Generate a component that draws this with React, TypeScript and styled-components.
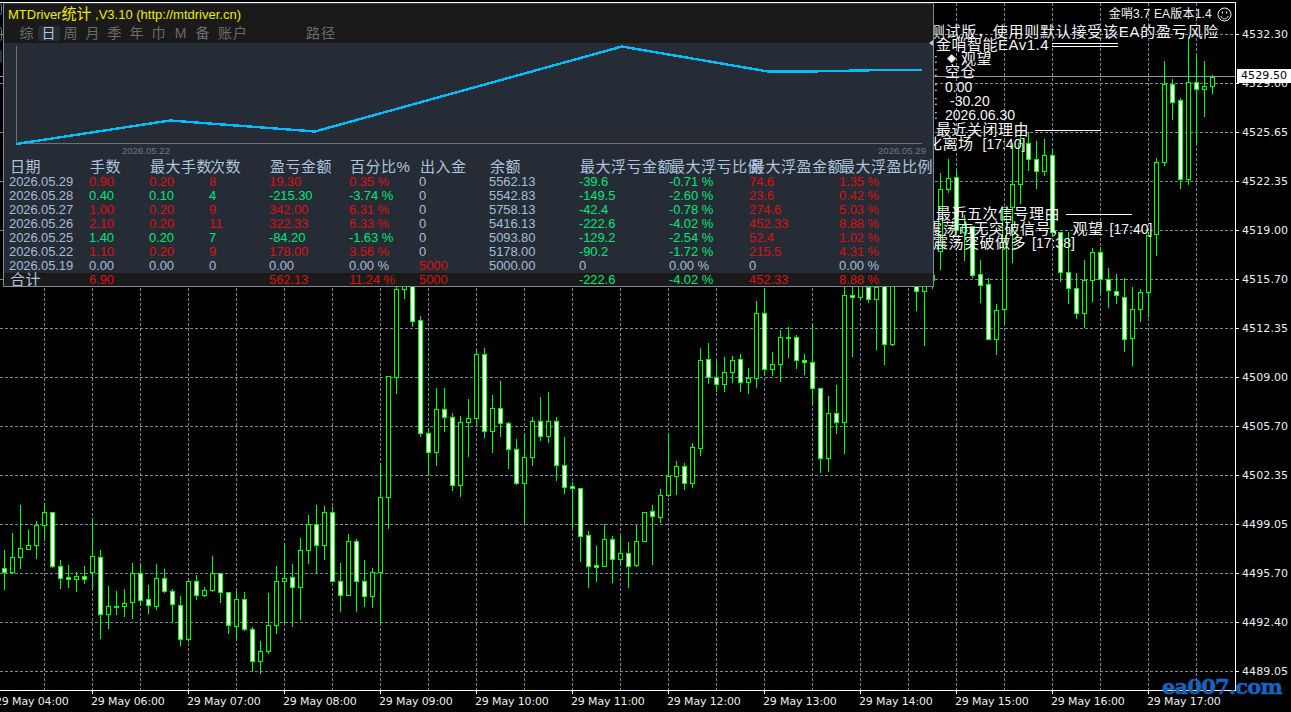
import * as React from "react"
import styled, { createGlobalStyle } from "styled-components"

const cjk = `"Liberation Sans", "Noto Sans CJK SC", sans-serif`
const axisFont = `"DejaVu Sans", sans-serif`

const GlobalStyle = createGlobalStyle`
  html, body {
    margin: 0;
    padding: 0;
    background: #000;
  }
`

const Page = styled.div`
  position: relative;
  width: 1291px;
  height: 712px;
  padding-top: 2px;
  box-sizing: border-box;
  overflow: hidden;
  background: #000;
  display: flex;
  flex-direction: column;
`

const ChartRow = styled.div`
  display: flex;
  height: 689px;
`

const ChartArea = styled.div`
  width: 1235px;
  border-top: 1px solid #fff;
  border-bottom: 1px solid #fff;
  border-right: 1px solid #fff;
`

const ChartSvg = styled.svg`
  display: block;
`

const PriceAxis = styled.div`
  position: relative;
  flex: 1;
  padding-top: 8px;
  display: flex;
  flex-direction: column;
`

const PriceRow = styled.div`
  height: 49px;
  flex: none;
  display: flex;
  align-items: center;
  gap: 3px;
  font: 11px/14px ${axisFont};
  letter-spacing: 0.1px;
  color: #eee;

  &::before {
    content: "";
    width: 3px;
    height: 1px;
    background: #fff;
  }
`

const PriceTag = styled.div`
  position: absolute;
  left: 1px;
  top: 67px;
  width: 54px;
  height: 14px;
  padding-left: 4px;
  box-sizing: border-box;
  background: #fff;
  color: #000;
  font: 11px/14px ${axisFont};
  letter-spacing: 0.1px;
`

const TimeAxis = styled.div`
  display: flex;
  margin-left: -4px;
`

const TimeCell = styled.div`
  width: 96px;
  flex: none;
  color: #eee;
  font: 11px/14px ${axisFont};
  letter-spacing: -0.15px;
  white-space: nowrap;

  &::before {
    content: "";
    display: block;
    width: 1px;
    height: 3px;
    margin-bottom: 1px;
    background: #fff;
  }

  span {
    margin-left: -1px;
  }
`

const Watermark = styled.div`
  position: absolute;
  left: 1162px;
  top: 674px;
  z-index: 3;
  color: #1565c0;
  font: bold 21px/26px "DejaVu Serif", serif;
  letter-spacing: -0.8px;
  -webkit-text-stroke: 0.5px #1565c0;
`

const Panel = styled.div`
  position: absolute;
  left: 3px;
  top: 3px;
  z-index: 2;
  width: 931px;
  height: 284px;
  box-sizing: border-box;
  border: 1px solid #7d8998;
  border-top-color: #33383f;
  overflow: hidden;
  background: #252c36;
`

const TitleBar = styled.div`
  height: 21px;
  padding-left: 4px;
  background: #1a1a1a;
  color: #ecec00;
  font: 13px/20px ${cjk};
  white-space: nowrap;

  b {
    font-size: 15px;
    font-weight: normal;
  }
`

const Tabs = styled.div`
  position: relative;
  height: 18px;
  padding-left: 12px;
  display: flex;
  background: #1a1a1a;

  &::after {
    content: "";
    position: absolute;
    right: 0;
    bottom: -3px;
    border: 3px solid transparent;
    border-right: 4px solid #c4c4c4;
    border-left: 0;
  }
`

const Tab = styled.div<{ $active?: boolean; $gap?: number }>`
  min-width: 22px;
  height: 15px;
  margin-top: 1px;
  margin-left: ${(p) => p.$gap ?? 0}px;
  text-align: center;
  border-radius: 2px;
  background: ${(p) => (p.$active ? "#252c36" : "transparent")};
  color: ${(p) => (p.$active ? "#b0c4de" : "#6c6c6c")};
  font: 14px/15px ${cjk};
  letter-spacing: 1px;
`

const ChartBox = styled.svg`
  display: block;
  background: #252c36;
`

const columns = "80px 60px 60px 60px 80px 70px 70px 90px 90px 80px 90px 90px"

const HeadRow = styled.div`
  display: grid;
  grid-template-columns: ${columns};
  height: 16px;
  padding-left: 6px;
  color: #b0c4de;
  font: 15px/16px ${cjk};
  letter-spacing: 0.5px;
  white-space: nowrap;
`

const Row = styled.div`
  display: grid;
  grid-template-columns: ${columns};
  height: 14px;
  padding-left: 5px;
  font: 13px/14px ${cjk};
  letter-spacing: -0.1px;
  white-space: nowrap;
`

const TotalRow = styled(Row)`
  height: 16px;
  background: #1a1a1a;
`

const TotalName = styled.div`
  padding-left: 1px;
  color: #b0c4de;
  font-size: 15px;
  letter-spacing: 0.5px;
`

type Tone = "up" | "down" | "flat"

const toneColor: Record<Tone, string> = {
  up: "#dc1010",
  down: "#00e676",
  flat: "#a9bcd6",
}

const Cell = styled.div<{ $tone: Tone }>`
  color: ${(p) => toneColor[p.$tone]};
`

const Notes = styled.div`
  position: absolute;
  left: 920px;
  top: 7px;
  z-index: 1;
  width: 320px;
  display: flex;
  flex-direction: column;
  color: #f4f4f4;
`

const Badge = styled.div`
  height: 14px;
  padding-right: 8px;
  display: flex;
  justify-content: flex-end;
  align-items: center;
  gap: 5px;
  font: 12px/14px ${cjk};
  letter-spacing: 0.2px;
`

const Note = styled.div<{ $indent?: number; $top?: number }>`
  height: 14px;
  margin-top: ${(p) => p.$top ?? 0}px;
  padding-left: ${(p) => p.$indent ?? 16}px;
  display: flex;
  align-items: center;
  font: 15px/14px ${cjk};
  letter-spacing: 0.5px;
  white-space: nowrap;
`

const RiskNote = styled(Note)`
  justify-content: flex-end;
  padding-right: 21px;
  letter-spacing: 0.75px;
`

const Colon = styled.span`
  width: 11px;
  flex: none;
  font-size: 13px;
  letter-spacing: 0;
`

const Diamond = styled.span`
  margin: 0 5px 0 2px;
  font-size: 9px;
  letter-spacing: 0;
`

const Figure = styled.span<{ $left?: number }>`
  margin-left: ${(p) => p.$left ?? 0}px;
  font-size: 14px;
  letter-spacing: 0;
`

const Word = styled.span`
  margin-left: 6px;
`

const Rule = styled.span<{ $double?: boolean; $left: number }>`
  width: 66px;
  height: ${(p) => (p.$double ? 2 : 0)}px;
  margin-left: ${(p) => p.$left}px;
  border-top: 1px solid #fff;
  border-bottom: ${(p) => (p.$double ? "1px solid #fff" : "none")};
`

// x = 4 + 8 * index, values are pixel rows: high, body top, body bottom, low, filled
const candles: number[][] = [
  [550, 568, 572, 589, 1], [533, 557, 572, 573, 0], [505, 548, 557, 568, 0], [530, 545, 549, 549, 0],
  [521, 525, 545, 558, 0], [503, 512, 525, 540, 0], [512, 512, 566, 567, 1], [560, 566, 578, 588, 1],
  [565, 577, 579, 587, 1], [572, 576, 579, 591, 0], [566, 576, 579, 583, 1], [519, 556, 572, 588, 0],
  [550, 557, 614, 638, 1], [586, 606, 614, 628, 0], [591, 606, 607, 614, 0], [589, 603, 606, 616, 0],
  [563, 573, 602, 618, 0], [563, 573, 600, 605, 1], [585, 599, 605, 613, 1], [564, 578, 606, 609, 0],
  [569, 578, 591, 592, 1], [589, 591, 604, 622, 1], [596, 605, 639, 645, 1], [581, 581, 639, 641, 0],
  [575, 581, 595, 599, 1], [587, 590, 595, 596, 0], [556, 573, 590, 591, 0], [573, 573, 592, 602, 1],
  [592, 592, 625, 633, 1], [591, 599, 626, 640, 0], [592, 599, 629, 630, 1], [627, 629, 661, 671, 1],
  [641, 651, 661, 673, 0], [593, 625, 651, 653, 0], [566, 581, 625, 633, 0], [543, 578, 581, 622, 0],
  [564, 577, 587, 626, 1], [538, 550, 587, 619, 0], [515, 524, 550, 563, 0], [505, 524, 545, 573, 1],
  [506, 512, 545, 559, 0], [507, 512, 581, 581, 1], [563, 581, 595, 611, 1], [534, 541, 595, 595, 0],
  [539, 541, 581, 611, 1], [560, 581, 596, 606, 1], [568, 572, 596, 607, 0], [463, 497, 572, 622, 0],
  [376, 376, 497, 528, 0], [270, 289, 377, 393, 0], [270, 280, 289, 298, 0], [270, 280, 321, 326, 1],
  [316, 320, 433, 436, 1], [428, 433, 452, 475, 1], [388, 409, 452, 465, 0], [388, 409, 417, 431, 1],
  [413, 417, 485, 490, 1], [416, 422, 485, 496, 0], [399, 418, 422, 456, 0], [350, 354, 418, 425, 0],
  [348, 354, 431, 437, 1], [395, 408, 431, 452, 0], [381, 408, 423, 436, 1], [422, 423, 449, 468, 1],
  [439, 449, 483, 484, 1], [434, 457, 483, 522, 0], [417, 421, 457, 465, 0], [397, 421, 436, 440, 1],
  [392, 421, 436, 442, 0], [417, 421, 465, 480, 1], [437, 465, 487, 493, 1], [482, 486, 488, 527, 1],
  [488, 488, 536, 561, 1], [531, 535, 566, 587, 1], [546, 565, 567, 581, 1], [524, 539, 566, 566, 0],
  [536, 539, 559, 582, 1], [536, 553, 559, 563, 0], [542, 553, 566, 587, 1], [525, 541, 565, 566, 0],
  [512, 512, 541, 541, 0], [505, 511, 516, 564, 1], [489, 495, 517, 522, 0], [434, 476, 495, 496, 0],
  [461, 466, 476, 494, 0], [463, 466, 483, 489, 1], [443, 447, 483, 487, 0], [348, 360, 448, 455, 0],
  [343, 359, 377, 383, 1], [361, 377, 384, 391, 1], [357, 372, 384, 391, 0], [356, 360, 372, 382, 0],
  [354, 359, 382, 391, 1], [368, 378, 382, 393, 0], [301, 313, 378, 387, 0], [289, 313, 369, 375, 1],
  [352, 364, 369, 375, 0], [330, 337, 364, 381, 0], [327, 337, 338, 357, 0], [335, 337, 360, 368, 1],
  [354, 360, 362, 374, 1], [324, 362, 388, 403, 1], [388, 388, 458, 472, 1], [396, 413, 458, 471, 0],
  [385, 413, 422, 433, 1], [270, 295, 422, 453, 0], [270, 295, 297, 356, 1], [270, 280, 297, 299, 0],
  [270, 287, 299, 302, 1], [270, 287, 299, 349, 0], [270, 280, 344, 364, 1], [270, 280, 344, 345, 0],
  [270, 270, 272, 272, 0], [270, 270, 272, 272, 0], [270, 286, 291, 310, 1], [270, 280, 291, 345, 0],
  [270, 275, 280, 288, 0], [173, 189, 251, 269, 0], [159, 178, 189, 192, 0], [170, 177, 230, 233, 1],
  [215, 225, 232, 260, 0], [226, 226, 275, 277, 1], [260, 274, 285, 302, 1], [278, 284, 339, 339, 1],
  [304, 310, 339, 354, 0], [207, 207, 309, 323, 0], [143, 184, 207, 262, 0], [132, 143, 184, 203, 0],
  [132, 143, 159, 170, 1], [141, 159, 171, 188, 1], [139, 155, 171, 175, 0], [150, 155, 232, 236, 1],
  [232, 232, 272, 281, 1], [232, 272, 288, 303, 1], [273, 288, 313, 318, 1], [260, 280, 313, 327, 0],
  [248, 252, 280, 301, 0], [247, 252, 279, 292, 1], [268, 279, 290, 307, 1], [274, 291, 295, 303, 1],
  [278, 297, 339, 351, 1], [287, 309, 338, 365, 0], [289, 292, 309, 321, 0], [232, 235, 292, 316, 0],
  [158, 162, 234, 255, 0], [61, 84, 162, 165, 0], [79, 84, 102, 119, 1], [98, 100, 179, 188, 1],
  [37, 82, 179, 184, 0], [56, 82, 89, 143, 1], [61, 86, 89, 116, 0], [75, 77, 86, 93, 0],
]

const prices = [
  "4532.30", "4529.00", "4525.65", "4522.35", "4519.00", "4515.70", "4512.35",
  "4509.00", "4505.70", "4502.35", "4499.05", "4495.70", "4492.40", "4489.05",
]

const hours = ["04", "06", "07", "08", "09", "10", "11", "12", "13", "14", "15", "16", "17"]

const tabs = ["综", "日", "周", "月", "季", "年", "巾", "M", "备"]

const heads = [
  "日期", "手数", "最大手数", "次数", "盈亏金额", "百分比%", "出入金", "余额",
  "最大浮亏金额", "最大浮亏比例", "最大浮盈金额", "最大浮盈比例",
]

const rows: { tone: Tone; cells: string[] }[] = [
  { tone: "up", cells: ["2026.05.29", "0.90", "0.20", "8", "19.30", "0.35 %", "0", "5562.13", "-39.6", "-0.71 %", "74.6", "1.35 %"] },
  { tone: "down", cells: ["2026.05.28", "0.40", "0.10", "4", "-215.30", "-3.74 %", "0", "5542.83", "-149.5", "-2.60 %", "23.6", "0.42 %"] },
  { tone: "up", cells: ["2026.05.27", "1.00", "0.20", "9", "342.00", "6.31 %", "0", "5758.13", "-42.4", "-0.78 %", "274.6", "5.03 %"] },
  { tone: "up", cells: ["2026.05.26", "2.10", "0.20", "11", "322.33", "6.33 %", "0", "5416.13", "-222.6", "-4.02 %", "452.33", "8.88 %"] },
  { tone: "down", cells: ["2026.05.25", "1.40", "0.20", "7", "-84.20", "-1.63 %", "0", "5093.80", "-129.2", "-2.54 %", "52.4", "1.02 %"] },
  { tone: "up", cells: ["2026.05.22", "1.10", "0.20", "9", "178.00", "3.56 %", "0", "5178.00", "-90.2", "-1.72 %", "215.5", "4.31 %"] },
  { tone: "flat", cells: ["2026.05.19", "0.00", "0.00", "0", "0.00", "0.00 %", "5000", "5000.00", "0", "0.00 %", "0", "0.00 %"] },
]

const total = ["", "6.90", "", "", "562.13", "11.24 %", "5000", "", "-222.6", "-4.02 %", "452.33", "8.88 %"]

const cellTone = (col: number, rowTone: Tone, text: string): Tone => {
  if (text === "5000" && col === 6) return "up"
  if (col === 0 || col === 6 || col === 7) return "flat"
  if (rowTone === "flat") return "flat"
  if (col === 8 || col === 9) return "down"
  if (col === 10 || col === 11) return "up"
  return rowTone
}

const Candles = (): React.ReactElement => (
  <g shapeRendering="crispEdges">
    {candles.map(([high, top, bottom, low, filled], i) => {
      const x = 4 + 8 * i
      return (
        <g key={i}>
          <rect x={x} y={high} width={1} height={low - high + 1} fill="#00ff00" />
          <rect x={x - 2} y={top} width={5} height={bottom - top + 1} fill="#00ff00" />
          {bottom - top > 1 && (
            <rect x={x - 1} y={top + 1} width={3} height={bottom - top - 1} fill={filled ? "#fff" : "#000"} />
          )}
        </g>
      )
    })}
  </g>
)

const Grid = (): React.ReactElement => (
  <g stroke="#778899" strokeWidth={1} strokeDasharray="3 2" shapeRendering="crispEdges">
    {prices.map((_, i) => (
      <line key={i} x1={0} x2={1235} y1={34.5 + 49 * i} y2={34.5 + 49 * i} />
    ))}
    {Array.from({ length: 26 }, (_, i) => (
      <line key={i} x1={44.5 + 48 * i} x2={44.5 + 48 * i} y1={3} y2={690} />
    ))}
  </g>
)

const Smile = (): React.ReactElement => (
  <svg width="15" height="15" viewBox="0 0 15 15" fill="none" stroke="#f4f4f4">
    <circle cx="7.5" cy="7.5" r="6.5" />
    <path d="M3.8 9c.9 2 2.2 2.9 3.7 2.9S10.300 11 11.200 9" />
    <rect x="4.800" y="4.500" width="1.200" height="2" fill="#f4f4f4" stroke="none" />
    <rect x="9" y="4.500" width="1.200" height="2" fill="#f4f4f4" stroke="none" />
  </svg>
)

const App = (): React.ReactElement => {
  return (
    <Page>
      <GlobalStyle />
      <ChartRow>
        <ChartArea>
          <ChartSvg width="1235" height="687" viewBox="0 3 1235 687">
            <Grid />
            <rect x={0} y={76} width={1235} height={1} fill="#8899aa" />
            <Candles />
            <g fill="none" stroke="#777">
              <rect x={-6} y={3.500} width={7.500} height={11} rx={2} />
              <rect x={-6} y={27.500} width={7.500} height={13} rx={2} />
            </g>
            <rect x={-6} y={50} width={8} height={13} rx={2} fill="#333" />
          </ChartSvg>
        </ChartArea>
        <PriceAxis>
          {prices.map((p) => (
            <PriceRow key={p}>{p}</PriceRow>
          ))}
          <PriceTag>4529.50</PriceTag>
        </PriceAxis>
      </ChartRow>
      <TimeAxis>
        {hours.map((h) => (
          <TimeCell key={h}>
            <span>29 May {h}:00</span>
          </TimeCell>
        ))}
      </TimeAxis>

      <Notes>
        <Badge>
          金哨3.7 EA版本1.4
          <Smile />
        </Badge>
        <RiskNote $top={4}>测试版，使用则默认接受该EA的盈亏风险</RiskNote>
        <Note $top={-1}>
          金哨智能EAv1.4
          <Rule $double $left={3} />
        </Note>
        <Note $indent={14}>
          <Colon>:</Colon>
          <Diamond>◆</Diamond>
          观望
        </Note>
        <Note $indent={14} $top={-1}>
          <Colon>:</Colon>
          空仓
        </Note>
        <Note $indent={14} $top={1}>
          <Colon>:</Colon>
          <Figure>0.00</Figure>
        </Note>
        <Note $indent={14}>
          <Colon>:</Colon>
          <Figure $left={5}>-30.20</Figure>
        </Note>
        <Note $indent={14}>
          <Colon>:</Colon>
          <Figure>2026.06.30</Figure>
        </Note>
        <Note $top={1}>
          最近关闭理由
          <Rule $left={6} />
        </Note>
        <Note $indent={7}>
          化离场
          <Figure $left={9}>[17:40]</Figure>
        </Note>
        <Note $top={56}>
          最近五次信号理由
          <Rule $left={6} />
        </Note>
        <Note $indent={7} $top={1}>
          震荡市无突破信号，
          <Word>观望</Word>
          <Figure $left={6}>[17:40]</Figure>
        </Note>
        <Note $indent={13}>
          震荡突破做多
          <Figure $left={6}>[17:38]</Figure>
        </Note>
      </Notes>

      <Panel>
        <TitleBar>
          MTDriver<b>统计</b> ,V3.10 (http://mtdriver.cn)
        </TitleBar>
        <Tabs>
          {tabs.map((t) => (
            <Tab key={t} $active={t === "日"}>{t}</Tab>
          ))}
          <Tab $gap={4}>账户</Tab>
          <Tab $gap={58}>路径</Tab>
        </Tabs>
        <ChartBox width="929" height="116" viewBox="4 43 929 116">
          <g shapeRendering="crispEdges">
            <rect x={16} y={46} width={1} height={98} fill="#707070" />
            <rect x={16} y={143} width={906} height={1} fill="#707070" />
            <polyline
              points="16,144 170,120.500 315,131.500 622,46.500 768,71.500 809,71.500 885,70 922,69.700"
              fill="none"
              stroke="#00bfff"
              strokeWidth={2.4}
            />
          </g>
          <g fill="#6f7782" fontFamily="Liberation Sans" fontSize="9.6">
            <text x={122} y={154}>2026.05.22</text>
            <text x={878} y={154}>2026.05.29</text>
          </g>
        </ChartBox>
        <HeadRow>
          {heads.map((h) => (
            <div key={h}>{h}</div>
          ))}
        </HeadRow>
        {rows.map((r) => (
          <Row key={r.cells[0]}>
            {r.cells.map((c, i) => (
              <Cell key={i} $tone={cellTone(i, r.tone, c)}>{c}</Cell>
            ))}
          </Row>
        ))}
        <TotalRow>
          <TotalName>合计</TotalName>
          {total.slice(1).map((c, i) => (
            <Cell key={i} $tone={cellTone(i + 1, "up", c)}>{c}</Cell>
          ))}
        </TotalRow>
      </Panel>

      <Watermark>ea007.com</Watermark>
    </Page>
  )
}

export default App
